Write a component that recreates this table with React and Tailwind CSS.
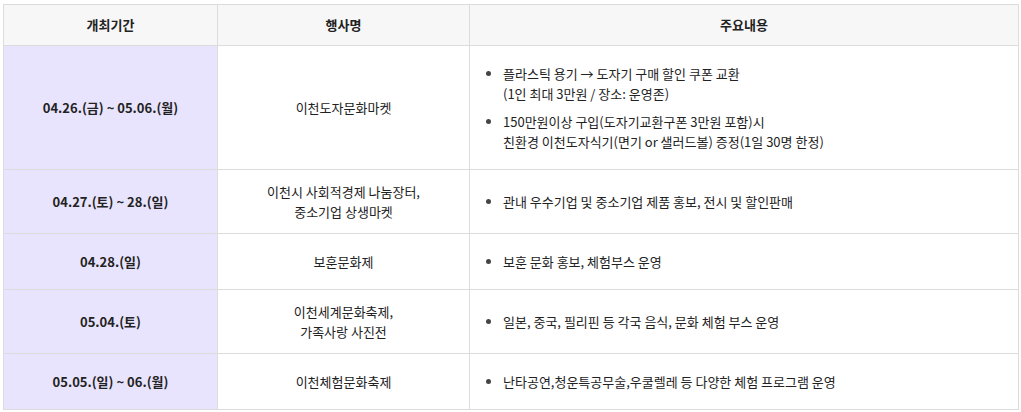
const rows = [
  {
    date: '04.26.(금) ~ 05.06.(월)',
    name: ['이천도자문화마켓'],
    items: [
      ['플라스틱 용기 → 도자기 구매 할인 쿠폰 교환', '(1인 최대 3만원 / 장소: 운영존)'],
      ['150만원이상 구입(도자기교환구폰 3만원 포함)시', '친환경 이천도자식기(면기 or 샐러드볼) 증정(1일 30명 한정)'],
    ],
  },
  {
    date: '04.27.(토) ~ 28.(일)',
    name: ['이천시 사회적경제 나눔장터,', '중소기업 상생마켓'],
    items: [['관내 우수기업 및 중소기업 제품 홍보, 전시 및 할인판매']],
  },
  {
    date: '04.28.(일)',
    name: ['보훈문화제'],
    items: [['보훈 문화 홍보, 체험부스 운영']],
  },
  {
    date: '05.04.(토)',
    name: ['이천세계문화축제,', '가족사랑 사진전'],
    items: [['일본, 중국, 필리핀 등 각국 음식, 문화 체험 부스 운영']],
  },
  {
    date: '05.05.(일) ~ 06.(월)',
    name: ['이천체험문화축제'],
    items: [['난타공연,청운특공무술,우쿨렐레 등 다양한 체험 프로그램 운영']],
  },
];

const App = () => {
  return (
    <div className="bg-white pt-[4px] pl-[3px] w-[1021px] h-[412px] text-[#222] text-[13px] leading-[20px] font-['Noto_Sans_CJK_KR','Noto_Sans',sans-serif]">
      <table className="table-fixed border-collapse w-[1015px]">
        <colgroup>
          <col className="w-[214px]" />
          <col className="w-[252px]" />
          <col className="w-[549px]" />
        </colgroup>
        <thead>
          <tr className="bg-[#f7f7f7]">
            <th className="border border-[#dcdcdc] py-[10px] font-bold text-center">개최기간</th>
            <th className="border border-[#dcdcdc] py-[10px] font-bold text-center">행사명</th>
            <th className="border border-[#dcdcdc] py-[10px] font-bold text-center">주요내용</th>
          </tr>
        </thead>
        <tbody>
          {rows.map((row, index) => (
            <tr key={index}>
              <td className="border border-[#dcdcdc] bg-[#e9e4fd] px-3 py-[11.5px] font-bold text-center align-middle">
                {row.date}
              </td>
              <td className="border border-[#dcdcdc] px-3 py-[11.5px] text-center align-middle">
                {row.name.map((line, i) => (
                  <div key={i}>{line}</div>
                ))}
              </td>
              <td className="border border-[#dcdcdc] px-3 py-[11.5px] align-middle">
                <ul className="list-disc pl-[21px] my-[6px] flex flex-col gap-[8px]">
                  {row.items.map((item, i) => (
                    <li key={i} className="marker:text-[#444]">
                      {item.map((line, j) => (
                        <div key={j}>{line}</div>
                      ))}
                    </li>
                  ))}
                </ul>
              </td>
            </tr>
          ))}
        </tbody>
      </table>
    </div>
  );
};

export default App;
